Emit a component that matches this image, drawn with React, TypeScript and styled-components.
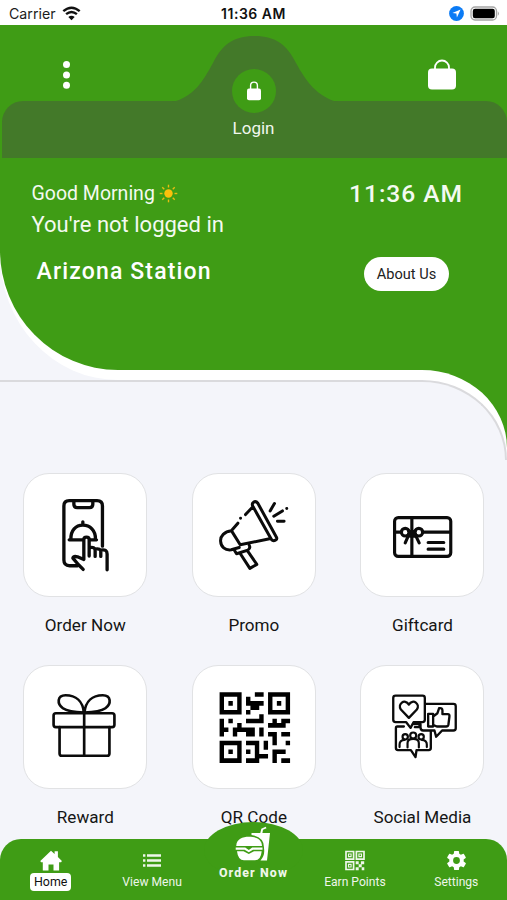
import React from "react";
import styled, { createGlobalStyle } from "styled-components";

const GREEN = "#3f9c15";
const SHEET = "#f4f5fa";

const Global = createGlobalStyle`
  * { box-sizing: border-box; }
  body { margin: 0; background: ${SHEET}; font-family: Roboto, "Liberation Sans", sans-serif; }
`;

const Screen = styled.div`
  position: relative;
  width: 507px;
  height: 900px;
  overflow: hidden;
  display: flex;
  flex-direction: column;
  background: ${SHEET};
`;

const StatusBar = styled.div`
  flex: none;
  height: 25px;
  padding: 2px 8px 0;
  background: #fff;
  color: #1c1c1c;
  display: grid;
  grid-template-columns: 1fr auto 1fr;
  align-items: center;
  font: 14.2px/20px Inter, sans-serif;
`;
const StatusSide = styled.div<{ $end?: boolean }>`
  display: flex;
  align-items: center;
  gap: 6px;
  padding-left: 1px;
  justify-content: ${(p) => (p.$end ? "flex-end" : "flex-start")};
`;
const Clock = styled.span`
  font-weight: 600;
  font-size: 14px;
  letter-spacing: 0.5px;
  color: #111;
`;

const Shell = styled.div`
  position: relative;
  flex: none;
  height: 355px;
  background: ${SHEET};
`;
const ShellEdge = styled.div`
  height: 355px;
  padding-bottom: 10px;
  background: #fff;
  border-bottom-left-radius: 118px 126px;
`;
const Hero = styled.header`
  height: 345px;
  background: ${GREEN};
  border-bottom-left-radius: 118px 120px;
`;
const TopArea = styled.div`
  height: 133px;
  padding: 76px 0 0 2px;
  position: relative;
`;
const Band = styled.div`
  height: 56.5px;
  background: #437929;
  border-radius: 21px 21px 0 0;
`;
const Hump = styled.svg`
  position: absolute;
  left: 172px;
  top: 11px;
`;
const TopRow = styled.div`
  position: absolute;
  inset: 0;
  padding: 33px 50px 0 61px;
  display: flex;
  justify-content: space-between;
  align-items: flex-start;
`;
const Login = styled.div`
  display: flex;
  flex-direction: column;
  align-items: center;
  margin: 11px 0 0 7px;
  color: #f1f7ee;
  font-size: 17px;
  line-height: 20px;
  gap: 5px;
`;
const LoginDisc = styled.div`
  width: 44px;
  height: 44px;
  border-radius: 50%;
  background: ${GREEN};
  display: flex;
  align-items: center;
  justify-content: center;
`;
const Greeting = styled.div`
  display: flex;
  justify-content: space-between;
  padding: 20px 44px 0 31.5px;
  color: #f4faf1;
`;
const GreetingLine = styled.div`
  display: flex;
  align-items: center;
  gap: 4px;
  font-size: 19.5px;
  line-height: 31px;
`;
const StatusLine = styled.div`
  font-size: 22px;
  line-height: 31px;
`;
const Time = styled.div`
  font-size: 24.6px;
  line-height: 32px;
  font-weight: 500;
  letter-spacing: 0.95px;
`;
const StationRow = styled.div`
  display: flex;
  align-items: center;
  justify-content: space-between;
  padding: 17px 58px 0 36.5px;
`;
const Station = styled.div`
  color: #fff;
  font-size: 23px;
  line-height: 28px;
  font-weight: 500;
  letter-spacing: 1.15px;
  margin-top: -4px;
`;
const Pill = styled.button`
  width: 85px;
  height: 34px;
  padding: 0;
  border: 0;
  border-radius: 17px;
  background: #fff;
  color: #222;
  font: 14.6px Roboto, sans-serif;
`;

const Corner = styled.div`
  position: absolute;
  left: 422px;
  top: 345px;
  width: 85px;
  height: 90px;
  background: linear-gradient(${GREEN} 78px, ${SHEET} 78px);
`;
const CornerWhite = styled.div`
  height: 90px;
  padding-top: 10px;
  background: #fff;
  border-top-right-radius: 85px 78px;
`;
const CornerSheet = styled.div`
  height: 80px;
  background: ${SHEET};
  border-top: 2px solid #dadadd;
  border-right: 2px solid #dadadd;
  border-top-right-radius: 85px 80px;
`;

const Sheet = styled.main`
  flex: 1;
  border-top: 2px solid #dadadd;
  padding: 91.4px 22.5px 0 23.3px;
`;
const Tiles = styled.div`
  display: grid;
  grid-template-columns: repeat(3, 124px);
  justify-content: space-between;
  row-gap: 40px;
`;
const Tile = styled.div`
  height: 152px;
  display: flex;
  flex-direction: column;
  align-items: center;
  gap: 17px;
`;
const TileCard = styled.div`
  flex: none;
  width: 124px;
  height: 124px;
  border-radius: 26px;
  border: 1px solid #e1e2e4;
  background: #fff;
`;
const TileLabel = styled.div`
  font-size: 17.1px;
  line-height: 22px;
  color: #151515;
  white-space: nowrap;
`;

const NavBar = styled.nav`
  position: absolute;
  left: 0;
  right: 0;
  bottom: 0;
  height: 61.5px;
  background: ${GREEN};
  border-radius: 21px 21px 0 0;
  display: grid;
  grid-template-columns: repeat(5, 1fr);
`;
const NavHump = styled.div`
  position: absolute;
  left: 203.5px;
  top: -17px;
  width: 99px;
  height: 56px;
  border-radius: 50%;
  background: ${GREEN};
`;
const NavItem = styled.div<{ $center?: boolean }>`
  position: relative;
  display: flex;
  flex-direction: column;
  align-items: center;
  color: #eef6ea;
  white-space: nowrap;
  padding-top: ${(p) => (p.$center ? 0 : 11)}px;
  margin-top: ${(p) => (p.$center ? -13 : 0)}px;
`;
const NavLabel = styled.span<{ $active?: boolean; $strong?: boolean }>`
  font-size: ${(p) => (p.$strong || p.$active ? 12.4 : 12.1)}px;
  line-height: 18px;
  letter-spacing: ${(p) => (p.$strong ? 1.1 : 0)}px;
  font-weight: ${(p) => (p.$strong ? 800 : 400)};
  margin-top: 2px;
  padding: 0 ${(p) => (p.$active ? 3.8 : 0)}px;
  border-radius: 4px;
  background: ${(p) => (p.$active ? "#fff" : "transparent")};
  color: ${(p) => (p.$active ? "#111" : "inherit")};
`;

const Line = styled.svg`
  display: block;
  width: 123px;
  height: 123px;
  fill: none;
  stroke: #0b0b0b;
  stroke-linecap: round;
  stroke-linejoin: round;
`;

const OrderIcon = () => (
  <Line viewBox="27 27 370 370" strokeWidth="10">
    <path d="M263 244V123q0-16-16-16H163q-16 0-16 16V286q0 17 17 17h24" />
    <path d="M177 108v10q0 10 10 10h37q10 0 10-10v-10M163 225h82M168 222c0-25 14-41 36-41s38 16 38 41M204 171v9" />
    <path
      d="M205 314l-14-14-17-20q1-7 14-4l19 8V224q0-7 8-7t8 7v50V249q18-4 18 8v18V253q17-3 17 8v14V256q19-4 19 12v47"
      fill="#fff"
    />
  </Line>
);
const PromoIcon = () => (
  <Line viewBox="28 27 370 370" strokeWidth="9">
    <path d="M210 112q7-5 13 3l56 102q3 6-3 9-7 4-12-2L208 124q-4-8 2-12ZM206 128l-20 21M171 160h.1M163 175l-19 22M144 198l26 42 92-19M144 198c-22 2-34 16-33 31 1 18 13 28 32 26l24-7" />
    <path d="M153 257l6 10 34-11q9-6 4-15M170 266l29 45 21-12-29-42M260 138l13-22M271 154l26-16M310 131h.1M282 169h20" />
  </Line>
);
const GiftcardIcon = () => (
  <Line viewBox="27 26 370 370" strokeWidth="9.5">
    <rect x="128" y="157" width="169" height="117" rx="11" />
    <path d="M180 157v117M129 201h19M214 201h82M229 232h47M229 252h47" />
    <circle cx="160" cy="201" r="11.5" />
    <circle cx="201" cy="201" r="11.5" />
    <path d="M172 206l-12 27M189 206l13 27M170 197l20 16M190 197l-20 16" />
    <rect x="176" y="199" width="9" height="14" fill="#0b0b0b" />
  </Line>
);
const RewardIcon = () => (
  <Line viewBox="26 26 370 370" strokeWidth="8">
    <rect x="115" y="168" width="183" height="42" rx="7" />
    <path d="M133 210v79q0 7 7 7h136q7 0 7-7v-79M207 168v128M206 166C203 132 182 114 151 114c-26 0-26 26-8 39 13 9 34 12 63 13ZM208 166C211 132 232 114 263 114c26 0 26 26 8 39-13 9-34 12-63 13Z" />
  </Line>
);

const QR_ROWS = [
  "11111...11.11111",
  "10001.1....10001",
  "10101.1111.10101",
  "10001..11..10001",
  "11111.1....11111",
  ".........1......",
  "1.1...1111..1.11",
  "1...1......1111.",
  "11.11111.1......",
  "1..1..11.1.11.11",
  "............1...",
  "11111.111.1.1..1",
  "10001...1.1.....",
  "10101.1.1...111.",
  "10001...111.1...",
  "11111.111...1.11",
];
const QR_PATH = QR_ROWS.map(
  (row, y) =>
    (row.match(/1+|[^1]+/g) ?? []).reduce<{ x: number; d: string }>(
      (acc, run) => ({
        x: acc.x + run.length,
        d: run[0] === "1" ? `${acc.d}M${acc.x} ${y}h${run.length}v1.04h-${run.length}Z` : acc.d,
      }),
      { x: 0, d: "" }
    ).d
).join("");
const QrIcon = () => (
  <Line viewBox="28 26 370 370">
    <path
      d={QR_PATH}
      transform="translate(108 105) scale(13.25)"
      fill="#000"
      stroke="none"
    />
  </Line>
);
const SocialIcon = () => (
  <Line viewBox="26 26 370 370" strokeWidth="7">
    <path d="M130 115h81q7 0 7 7v66q0 7-7 7h-27l-9 17-13-17h-32q-7 0-7-7v-66q0-7 7-7Z" />
    <path d="M170 182l-24-25c-11-16 11-35 24-15 13-20 35-1 24 15Z" />
    <path d="M219 140h85q7 0 7 7v66q0 7-7 7h-34l-18 19-5-19h-34q-8 0-8-10v-10" />
    <path d="M228 170h15v38h-15ZM244 177l12-9 5-15q10-2 10 7v11h16q6 0 5 7l-3 24q-1 6-7 6h-28l-10-4" />
    <path d="M155 208h-20q-4 0-4 5v60q0 6 6 6h39l14 21 3-21h37q6 0 6-6v-51M185 201h17v9h-14" />
    <g strokeWidth="6.5">
      <circle cx="159" cy="239" r="8" />
      <circle cx="183" cy="235" r="9" />
      <circle cx="207" cy="239" r="8" />
      <path d="M142 270v-8q0-13 15-14M166 271v-13q0-13 17-13t17 13v13M224 270v-8q0-13-15-14" />
    </g>
  </Line>
);

const TILES: [string, () => React.ReactElement][] = [
  ["Order Now", OrderIcon],
  ["Promo", PromoIcon],
  ["Giftcard", GiftcardIcon],
  ["Reward", RewardIcon],
  ["QR Code", QrIcon],
  ["Social Media", SocialIcon],
];

const WifiIcon = () => (
  <svg width="19" height="15" viewBox="0 0 19 15" fill="none" stroke="#111" strokeWidth="2.4">
    <path d="M1.3 5.2q8.2-7 16.4 0M4.1 8.2q5.4-4.6 10.8 0" />
    <path d="M6.3 11q3.2-2.6 6.4 0l-3.2 3.3Z" fill="#111" stroke="none" />
  </svg>
);
const LocationIcon = () => (
  <svg width="15" height="15" viewBox="0 0 15 15">
    <circle cx="7.5" cy="7.5" r="7.4" fill="#0b7bf5" />
    <path d="M11.6 3.4 3.4 7l4 .6.5 4Z" fill="#fff" />
  </svg>
);
const BatteryIcon = () => (
  <svg width="29.5" height="15" viewBox="0 0 29.5 15">
    <rect x="1" y="1" width="25.5" height="13" rx="4" fill="#fff" stroke="#a5a5a5" strokeWidth="1.3" />
    <rect x="2.8" y="2.8" width="22" height="9.4" rx="2.2" fill="#000" />
    <path d="M27.8 5.2q2.2 2.3 0 4.6Z" fill="#a5a5a5" />
  </svg>
);
const DotsIcon = () => (
  <svg width="12" height="34" viewBox="0 0 12 34" fill="#fff">
    <circle cx="5.5" cy="6.5" r="3.5" />
    <circle cx="5.5" cy="17" r="3.5" />
    <circle cx="5.5" cy="27.3" r="3.5" />
  </svg>
);
const BagIcon = () => (
  <svg width="30" height="32" viewBox="0 0 30 32">
    <rect x="1" y="10.5" width="28" height="21" rx="4" fill="#fff" />
    <path d="M8 12V9.5a7 7 0 0 1 14 0V12" fill="none" stroke="#fff" strokeWidth="1.8" />
  </svg>
);
const LockIcon = () => (
  <svg width="14" height="20" viewBox="0 0 14 20">
    <rect x="0" y="7.5" width="14" height="11.7" rx="2" fill="#fff" />
    <path d="M3.6 8.5V4.5a3.4 3.4 0 0 1 6.8 0v4" fill="none" stroke="#fff" strokeWidth="1.4" />
  </svg>
);
const SunIcon = () => (
  <svg width="19" height="19" viewBox="-9.5 -9.5 19 19">
    <circle r="4.2" fill="#fcc00b" />
    <g stroke="#e9bd10" strokeWidth="1.4">
      {[0, 45, 90, 135, 180, 225, 270, 315].map((a) => (
        <path key={a} d="M0-8.8V-6" transform={`rotate(${a})`} />
      ))}
    </g>
  </svg>
);
const HomeIcon = () => (
  <svg width="22" height="21" viewBox="0 0 22 21" fill="#fff">
    <path d="M11 .7 14.6 4V1.2h3.3v5.9l4 3.9-.8 1.3h-2v8.1h-5.6v-5.8h-5v5.8H2.8v-8.1H1L.3 11Z" />
  </svg>
);
const ListIcon = () => (
  <svg width="18" height="21" viewBox="0 0 18 21" fill="#eef6ea">
    {[4.3, 9.3, 14.3].map((y) => (
      <path key={y} d={`M0 ${y}h2.4v2.4H0ZM4 ${y}h14v2.4H4Z`} />
    ))}
  </svg>
);
const MiniQrIcon = () => (
  <svg width="20" height="21" viewBox="0 0 20 21" fill="none" stroke="#eef6ea" strokeWidth="1.7">
    <path d="M1 1.5h7.6v7.6H1ZM11.4 1.5H19v7.6h-7.6ZM1 11.9h7.6v7.6H1Z" />
    <path d="M3.5 4h2.6v2.6H3.5ZM13.9 4h2.6v2.6h-2.6ZM3.5 14.4h2.6V17H3.5Z" strokeWidth="1.1" />
    <path d="M10.7 11.2h3v3h-3Zm5.2 0h3.3v3h-3.3Zm-2.2 3h3v3h-3Zm-3 3h3v3h-3Zm6 0h2.6v3h-2.6Z" fill="#eef6ea" stroke="none" />
  </svg>
);
const GearIcon = () => (
  <svg width="23" height="21" viewBox="1 1.5 22 21" fill="#fff">
    <path d="M19.14 12.94c.04-.3.06-.61.06-.94s-.02-.64-.07-.94l2.03-1.58a.5.5 0 0 0 .12-.61l-1.92-3.32a.49.49 0 0 0-.59-.22l-2.39.96a7 7 0 0 0-1.62-.94l-.36-2.54a.48.48 0 0 0-.48-.41h-3.84a.47.47 0 0 0-.47.41l-.36 2.54a7.3 7.3 0 0 0-1.62.94l-2.39-.96a.48.48 0 0 0-.59.22L2.74 8.87a.47.47 0 0 0 .12.61l2.03 1.58a6 6 0 0 0 0 1.88l-2.03 1.58a.5.5 0 0 0-.12.61l1.92 3.32c.12.22.37.29.59.22l2.39-.96c.5.38 1.03.7 1.62.94l.36 2.54c.05.24.24.41.48.41h3.84c.24 0 .44-.17.47-.41l.36-2.54a7.3 7.3 0 0 0 1.62-.94l2.39.96c.22.08.47 0 .59-.22l1.92-3.32a.47.47 0 0 0-.12-.61ZM12 15.4a3.4 3.4 0 1 1 0-6.8 3.4 3.4 0 0 1 0 6.8Z" />
  </svg>
);
const MealIcon = () => (
  <svg width="36" height="36" viewBox="0 0 36 36" fill="#fff">
    <path d="M16.5 7h8.8l1-4.3L30.7.8l.8 1.4-3.5 1.6-.6 3.2H35l-3 27.5h-6.5q4.7-5 3.5-12.3Q29.5 11 16.5 9Z" />
    <path d="M1.2 20C1.5 13 7.5 10.8 14 10.8S26.7 13 27 20Z" />
    <path d="M.7 21.5h9.500l3.600 2.500 3.400-2.500h10.300v2.300H18l-4.200 2.500-4.200-2.500H.7ZM2 25.200h6.500l5.300 2.900 5.200-2.900h7.700q-.9 9-6.700 9H9Q3 34.200 2 25.200Z" />
  </svg>
);

export default function App() {
  return (
    <Screen>
      <Global />
      <StatusBar>
        <StatusSide>
          Carrier <WifiIcon />
        </StatusSide>
        <Clock>11:36 AM</Clock>
        <StatusSide $end>
          <LocationIcon />
          <BatteryIcon />
        </StatusSide>
      </StatusBar>
      <Shell>
        <ShellEdge>
          <Hero>
            <TopArea>
              <Band />
              <Hump width="168" height="67" viewBox="0 0 168 67">
                <path
                  d="M0 66C22 61 31 45 41 27C50 9 61 0 82.5 0S115 9 124 27C134 45 145 61 166 66Z"
                  fill="#437929"
                />
              </Hump>
              <TopRow>
                <DotsIcon />
                <Login>
                  <LoginDisc>
                    <LockIcon />
                  </LoginDisc>
                  Login
                </Login>
                <BagIcon />
              </TopRow>
            </TopArea>
            <Greeting>
              <div>
                <GreetingLine>
                  Good Morning <SunIcon />
                </GreetingLine>
                <StatusLine>You're not logged in</StatusLine>
              </div>
              <Time>11:36 AM</Time>
            </Greeting>
            <StationRow>
              <Station>Arizona Station</Station>
              <Pill>About Us</Pill>
            </StationRow>
          </Hero>
        </ShellEdge>
        <Corner>
          <CornerWhite>
            <CornerSheet />
          </CornerWhite>
        </Corner>
      </Shell>
      <Sheet>
        <Tiles>
          {TILES.map(([label, Icon]) => (
            <Tile key={label}>
              <TileCard>
                <Icon />
              </TileCard>
              <TileLabel>{label}</TileLabel>
            </Tile>
          ))}
        </Tiles>
      </Sheet>
      <NavBar>
        <NavHump />
        <NavItem>
          <HomeIcon />
          <NavLabel $active>Home</NavLabel>
        </NavItem>
        <NavItem>
          <ListIcon />
          <NavLabel>View Menu</NavLabel>
        </NavItem>
        <NavItem $center>
          <MealIcon />
          <NavLabel $strong>Order Now</NavLabel>
        </NavItem>
        <NavItem>
          <MiniQrIcon />
          <NavLabel>Earn Points</NavLabel>
        </NavItem>
        <NavItem>
          <GearIcon />
          <NavLabel>Settings</NavLabel>
        </NavItem>
      </NavBar>
    </Screen>
  );
}
